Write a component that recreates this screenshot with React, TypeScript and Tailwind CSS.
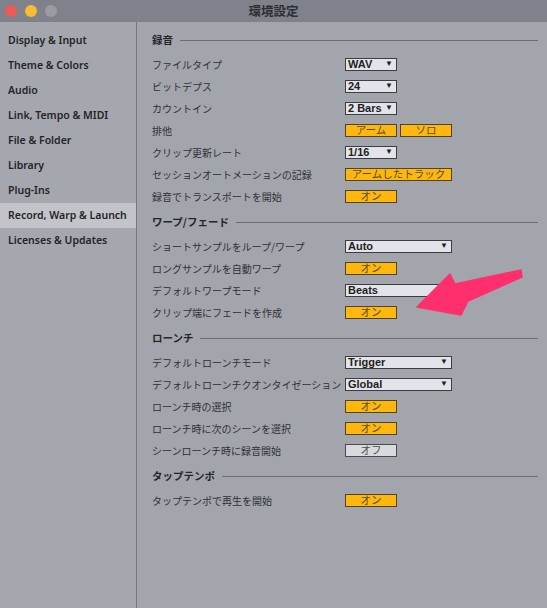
import React from "react";

const jp = { fontFamily: '"Noto Sans CJK JP", "Noto Sans", sans-serif' };
const ui = { fontFamily: '"Noto Sans", "Noto Sans CJK JP", sans-serif' };

type Ctl =
  | { kind: "select"; value: string; wide?: boolean }
  | { kind: "toggle"; label: string; on: boolean; wide?: boolean }
  | { kind: "pair"; a: string; b: string };

type Row = { label: string; ctl: Ctl };
type Section = { title: string; rows: Row[] };

const sections: Section[] = [
  {
    title: "録音",
    rows: [
      { label: "ファイルタイプ", ctl: { kind: "select", value: "WAV" } },
      { label: "ビットデプス", ctl: { kind: "select", value: "24" } },
      { label: "カウントイン", ctl: { kind: "select", value: "2 Bars" } },
      { label: "排他", ctl: { kind: "pair", a: "アーム", b: "ソロ" } },
      { label: "クリップ更新レート", ctl: { kind: "select", value: "1/16" } },
      { label: "セッションオートメーションの記録", ctl: { kind: "toggle", label: "アームしたトラック", on: true, wide: true } },
      { label: "録音でトランスポートを開始", ctl: { kind: "toggle", label: "オン", on: true } },
    ],
  },
  {
    title: "ワープ/フェード",
    rows: [
      { label: "ショートサンプルをループ/ワープ", ctl: { kind: "select", value: "Auto", wide: true } },
      { label: "ロングサンプルを自動ワープ", ctl: { kind: "toggle", label: "オン", on: true } },
      { label: "デフォルトワープモード", ctl: { kind: "select", value: "Beats", wide: true } },
      { label: "クリップ端にフェードを作成", ctl: { kind: "toggle", label: "オン", on: true } },
    ],
  },
  {
    title: "ローンチ",
    rows: [
      { label: "デフォルトローンチモード", ctl: { kind: "select", value: "Trigger", wide: true } },
      { label: "デフォルトローンチクオンタイゼーション", ctl: { kind: "select", value: "Global", wide: true } },
      { label: "ローンチ時の選択", ctl: { kind: "toggle", label: "オン", on: true } },
      { label: "ローンチ時に次のシーンを選択", ctl: { kind: "toggle", label: "オン", on: true } },
      { label: "シーンローンチ時に録音開始", ctl: { kind: "toggle", label: "オフ", on: false } },
    ],
  },
  {
    title: "タップテンポ",
    rows: [{ label: "タップテンポで再生を開始", ctl: { kind: "toggle", label: "オン", on: true } }],
  },
];

const navItems = [
  "Display & Input",
  "Theme & Colors",
  "Audio",
  "Link, Tempo & MIDI",
  "File & Folder",
  "Library",
  "Plug-Ins",
  "Record, Warp & Launch",
  "Licenses & Updates",
];

function Select({ value, wide }: { value: string; wide?: boolean }) {
  return (
    <div
      className={`flex h-[13px] items-center justify-between border border-[#3c3d42] bg-[#e3e4e9] pl-[2px] pr-[3px] text-[11px] leading-none text-[#1e1e22] ${
        wide ? "w-[107px]" : "w-[52px]"
      }`}
      style={{ fontFamily: '"Liberation Sans", Arial, sans-serif', fontWeight: 600 }}
    >
      <span>{value}</span>
      <span className="text-[8px] leading-none">▼</span>
    </div>
  );
}

function Toggle({ label, on, wide }: { label: string; on: boolean; wide?: boolean }) {
  return (
    <div
      className={`flex h-[13px] items-center justify-center border text-[10.5px] leading-none ${
        on ? "border-[#4f4526] bg-[#fdb70d] text-[#5a4b22]" : "border-[#4a4b50] bg-[#d9dade] text-[#4a4b50]"
      } ${wide ? "w-[107px]" : "w-[52px]"}`}
      style={jp}
    >
      {label}
    </div>
  );
}

function Control({ ctl }: { ctl: Ctl }) {
  if (ctl.kind === "select") return <Select value={ctl.value} wide={ctl.wide} />;
  if (ctl.kind === "toggle") return <Toggle label={ctl.label} on={ctl.on} wide={ctl.wide} />;
  return (
    <div className="flex gap-[3px]">
      <Toggle label={ctl.a} on />
      <Toggle label={ctl.b} on />
    </div>
  );
}

export default function App() {
  return (
    <div className="relative flex h-[608px] w-[547px] flex-col overflow-hidden bg-[#a3a5ad]">
      {/* title bar */}
      <div className="relative flex h-[22px] shrink-0 items-center bg-[#7f828b]">
        <div className="flex items-center gap-[8px] pl-[5px]">
          <span className="h-[12px] w-[12px] rounded-full bg-[#ee5a55]" />
          <span className="h-[12px] w-[12px] rounded-full bg-[#f6bd32]" />
          <span className="h-[12px] w-[12px] rounded-full bg-[#9a9ca3]" />
        </div>
        <div
          className="absolute inset-x-0 top-0 flex h-[22px] items-center justify-center text-[12.5px] font-bold text-[#2e2f33]"
          style={jp}
        >
          環境設定
        </div>
      </div>

      <div className="flex flex-1">
        {/* sidebar */}
        <div className="flex w-[137px] shrink-0 flex-col border-r border-[#74767e] bg-[#a5a7af] pt-[6px]">
          {navItems.map((item) => (
            <div
              key={item}
              className={`flex h-[25px] items-center pl-[8px] text-[10.5px] font-semibold text-[#232428] ${
                item === "Record, Warp & Launch" ? "bg-[#c2c4ca]" : ""
              }`}
              style={ui}
            >
              {item}
            </div>
          ))}
        </div>

        {/* settings */}
        <div className="flex flex-1 flex-col pl-[15px] pr-[9px] pt-[7px]">
          {sections.map((s, si) => (
            <div key={s.title} className={si === 0 ? "" : "mt-[4px]"}>
              <div className="mb-[2px] flex h-[22px] items-center gap-[7px]">
                <span className="text-[10.5px] font-bold text-[#25262a]" style={jp}>
                  {s.title}
                </span>
                <div className="h-px flex-1 bg-[#6c6e75]" />
              </div>
              {s.rows.map((r) => (
                <div key={r.label} className="flex h-[22px] items-center">
                  <div className="w-[193px] whitespace-nowrap text-[10px] text-[#303136]" style={jp}>
                    {r.label}
                  </div>
                  <Control ctl={r.ctl} />
                </div>
              ))}
            </div>
          ))}
        </div>
      </div>

      {/* annotation arrow */}
      <svg className="pointer-events-none absolute left-0 top-0" width="547" height="608">
        <polygon
          points="417,307 450,274 455,284 521,270 522,277 468,301 461,315"
          fill="#ff2f6e"
          stroke="#ff2f6e"
          strokeWidth="1.5"
          strokeLinejoin="round"
        />
      </svg>
    </div>
  );
}
